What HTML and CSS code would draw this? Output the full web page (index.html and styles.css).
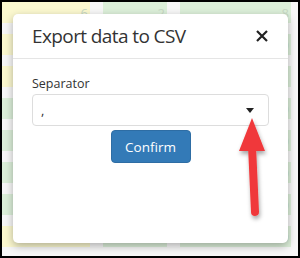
FILE: index.html
```html
<!DOCTYPE html>
<html lang="en">
<head>
<meta charset="utf-8">
<title>Export data to CSV</title>
<link rel="stylesheet" href="styles.css">
</head>
<body>
<div class="frame">
  <div class="page">
    <div class="grid">
      <div class="cell y"><span>6</span></div><div class="cell g"><span>2</span></div><div class="cell g"><span>8</span></div>
      <div class="cell y"></div><div class="cell g"></div><div class="cell g"><span>0</span></div>
      <div class="cell y"></div><div class="cell g"></div><div class="cell g"><span>1</span></div>
      <div class="cell g"></div><div class="cell g"></div><div class="cell g"><span>0</span></div>
      <div class="cell g"></div><div class="cell g"></div><div class="cell g"><span>0</span></div>
      <div class="cell g"></div><div class="cell g"></div><div class="cell g"><span>0</span></div>
      <div class="cell g"></div><div class="cell g"></div><div class="cell g"><span>0</span></div>
      <div class="cell y"></div><div class="cell g"></div><div class="cell g"><span>0</span></div>
    </div>

    <div class="modal">
      <div class="modal-header">
        <span class="modal-title">Export data to CSV</span>
        <svg class="close" width="12" height="12" viewBox="0 0 12 12">
          <path d="M1 1 L11 11 M11 1 L1 11" stroke="#222" stroke-width="2.2"/>
        </svg>
      </div>
      <div class="modal-body">
        <label class="label">Separator</label>
        <div class="select">
          <span>,</span>
          <span class="caret"></span>
        </div>
        <div class="actions">
          <button class="btn">Confirm</button>
        </div>
      </div>
    </div>

    <svg class="arrow" width="40" height="110" viewBox="0 0 40 110">
      <defs>
        <filter id="sh" x="-50%" y="-20%" width="200%" height="150%">
          <feDropShadow dx="1" dy="3" stdDeviation="2" flood-color="#000" flood-opacity="0.35"/>
        </filter>
      </defs>
      <g filter="url(#sh)">
        <polygon points="17,2 4,35 30,35" fill="#f0393b"/>
        <path d="M17 30 L20 96" stroke="#f0393b" stroke-width="8" stroke-linecap="round"/>
      </g>
    </svg>
  </div>
</div>
</body>
</html>
```

FILE: styles.css
```css
body {
  margin: 0;
  background: #000;
}

.frame {
  padding: 2px;
  width: 296px;
  height: 254px;
}

.page {
  position: relative;
  width: 296px;
  height: 254px;
  background: #f7f7f7;
  overflow: hidden;
  font-family: "Open Sans", sans-serif;
}

.grid {
  display: grid;
  grid-template-columns: 88px 64px 111px;
  column-gap: 13px;
  row-gap: 11px;
}

.cell {
  height: 21px;
  position: relative;
}

.cell span {
  position: absolute;
  right: 2px;
  top: 2px;
  font-size: 13px;
  color: #c7d8c4;
}

.y { background: #fbf8cf; }
.g { background: #dcefd9; }

.modal {
  position: absolute;
  left: 11px;
  top: 12px;
  width: 275px;
  height: 229px;
  background: #fff;
  border-radius: 5px;
  box-shadow: 0 3px 8px rgba(0,0,0,0.3);
  color: #333;
}

.modal-header {
  height: 44px;
  display: flex;
  align-items: center;
  justify-content: space-between;
  padding: 0 20px 0 19px;
  border-bottom: 1px solid #e5e5e5;
}

.modal-title {
  font-size: 19px;
  letter-spacing: -0.6px;
}

.modal-body {
  padding: 18px 19px;
}

.label {
  display: block;
  font-size: 12.5px;
  line-height: 14px;
  margin-bottom: 3px;
}

.select {
  height: 30px;
  border: 1px solid #ddd;
  border-radius: 4px;
  display: flex;
  align-items: center;
  justify-content: space-between;
  padding: 0 14px 0 8px;
  font-size: 13px;
}

.caret {
  width: 0;
  height: 0;
  border-left: 4px solid transparent;
  border-right: 4px solid transparent;
  border-top: 5px solid #222;
}

.actions {
  display: flex;
  justify-content: center;
  padding-top: 4px;
}

.btn {
  width: 80px;
  height: 33px;
  background: #337ab7;
  border: 1px solid #2e6da4;
  border-radius: 4px;
  color: #fff;
  font-family: "Open Sans", sans-serif;
  font-size: 13.5px;
}

.arrow {
  position: absolute;
  left: 233px;
  top: 114px;
}
```
